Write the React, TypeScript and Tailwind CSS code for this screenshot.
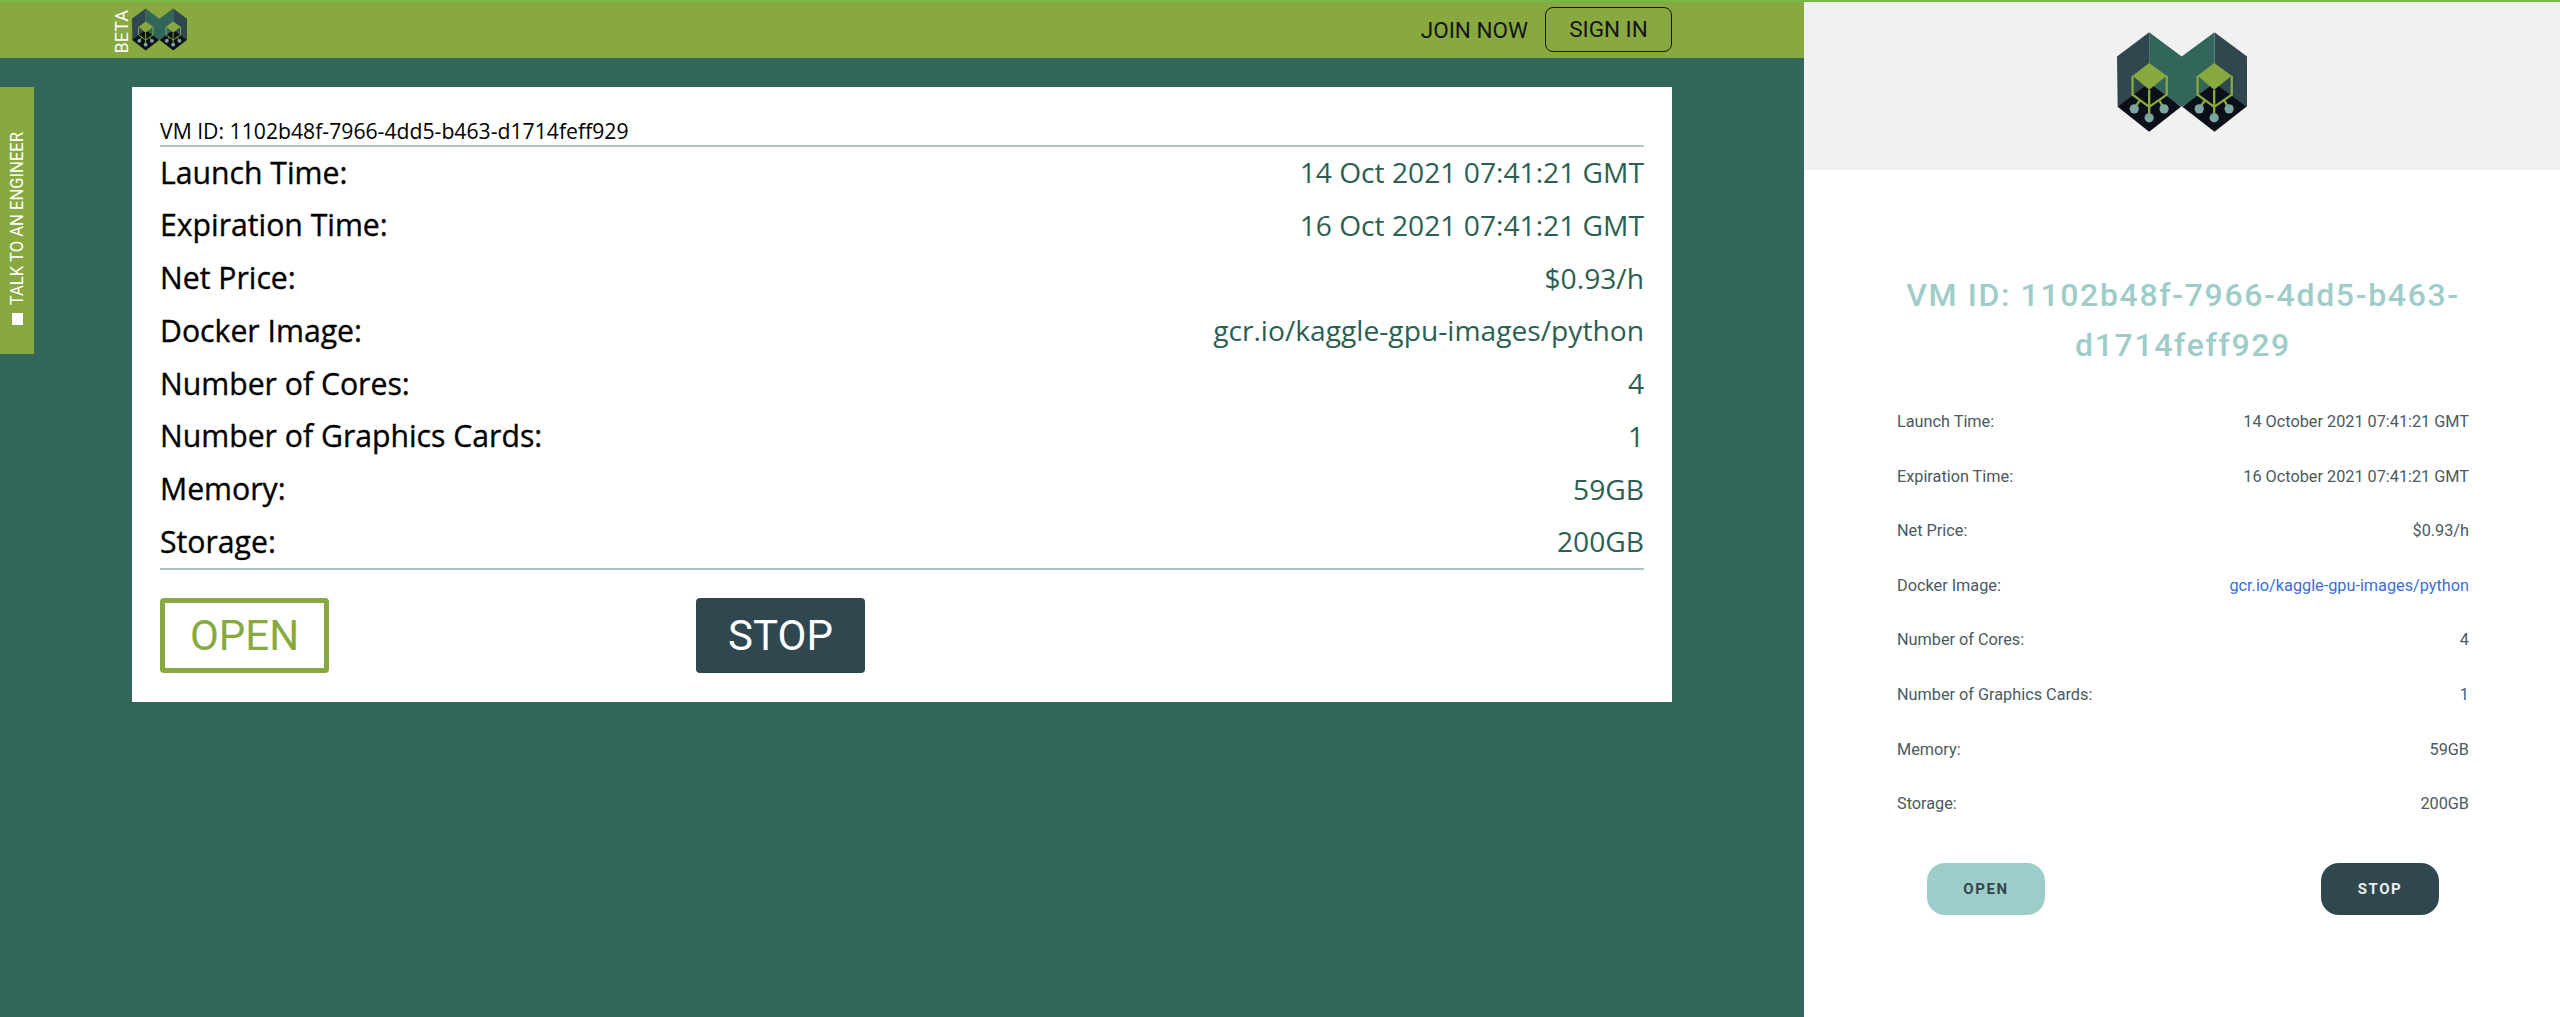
const rows = [
  ["Launch Time:", "14 Oct 2021 07:41:21 GMT", "14 October 2021 07:41:21 GMT"],
  ["Expiration Time:", "16 Oct 2021 07:41:21 GMT", "16 October 2021 07:41:21 GMT"],
  ["Net Price:", "$0.93/h", "$0.93/h"],
  ["Docker Image:", "gcr.io/kaggle-gpu-images/python", "gcr.io/kaggle-gpu-images/python"],
  ["Number of Cores:", "4", "4"],
  ["Number of Graphics Cards:", "1", "1"],
  ["Memory:", "59GB", "59GB"],
  ["Storage:", "200GB", "200GB"],
];

function Unit({ dx }: { dx: number }) {
  return (
    <g transform={`translate(${dx} 0)`}>
      <polygon points="100,168 150,130 203,168 150,210" fill="#87a93f" />
      <path d="M100 168V225L150 262L203 225V168M150 210V290M122 242L106 266M180 242L194 266" fill="none" stroke="#87a93f" strokeWidth="7" />
      <circle cx="105" cy="268" r="14" fill="#7da5a1" />
      <circle cx="150" cy="295" r="14" fill="#7da5a1" />
      <circle cx="195" cy="268" r="14" fill="#7da5a1" />
    </g>
  );
}

function Logo({ className }: { className: string }) {
  return (
    <svg viewBox="53 37 392 300" className={className}>
      <polygon points="150,37 53,110 55,262 150,262" fill="#31474f" />
      <polygon points="347,37 445,110 445,262 347,262" fill="#31474f" />
      <polygon points="150,37 248,110 347,37 347,200 248,262 150,200" fill="#33665a" />
      <polygon points="55,262 150,190 246,262 150,337" fill="#0a0f18" />
      <polygon points="250,262 347,190 443,262 347,337" fill="#0a0f18" />
      <Unit dx={0} />
      <Unit dx={196} />
    </svg>
  );
}

export default function App() {
  return (
    <div className="flex flex-col h-[1017px] w-full overflow-hidden bg-white font-['Roboto',sans-serif]">
      <div className="h-[2px] bg-[#76b947] shrink-0" />
      <div className="flex flex-1 min-h-0">
        <div className="relative w-[1804px] shrink-0 bg-[#33665a]">
          <header className="h-[56px] bg-[#87a93f] flex items-center pl-[112px] pr-[132px]">
            <span className="[writing-mode:vertical-rl] rotate-180 text-white text-[18px] leading-[19px] -mb-[4px]">BETA</span>
            <Logo className="w-[55px] h-[43px] ml-[1px] -mt-[2px]" />
            <span className="ml-auto text-[22.5px] text-[#151515] mr-[17px] pt-[2px]">JOIN NOW</span>
            <span className="w-[127px] h-[45px] rounded-[8px] border-[1.5px] border-[#151515] flex items-center justify-center text-[22.5px] text-[#151515] -mt-[2px] pt-[2px]">SIGN IN</span>
          </header>
          <div className="absolute left-0 top-[85px] w-[34px] h-[267px] bg-[#87a93f] flex flex-col justify-end items-center pb-[29px]">
            <span className="[writing-mode:vertical-rl] rotate-180 scale-x-[1.12] text-white text-[16.6px] leading-[20px] whitespace-nowrap">TALK TO AN ENGINEER</span>
            <span className="w-[11px] h-[12px] bg-white mt-[8px]" />
          </div>
          <main className="ml-[132px] mt-[29px] w-[1540px] h-[615px] bg-white px-[28px] pt-[29px] font-['Open_Sans',sans-serif]">
            <div className="text-[21.2px] leading-[29px] h-[29px] text-black border-b-2 border-[#b0c5c6] box-content">VM ID: 1102b48f-7966-4dd5-b463-d1714feff929</div>
            <div className="border-b-2 border-[#a6c2c6] h-[424px] flex flex-col justify-start -mt-px">
              {rows.map((r) => (
                <div key={r[0]} className="flex justify-between items-center h-[52.8px]">
                  <span className="text-black text-[30.2px] [-webkit-text-stroke:0.35px_black]">{r[0]}</span>
                  <span className="text-[#2b5f52] text-[28.2px]">{r[1]}</span>
                </div>
              ))}
            </div>
            <div className="flex mt-[28px]">
              <button className="w-[169px] h-[75px] rounded-[4px] border-[5px] border-[#87a93f] text-[#87a93f] text-[42px] font-['Roboto',sans-serif] flex items-center justify-center">OPEN</button>
              <button className="w-[169px] h-[75px] rounded-[4px] bg-[#31474f] text-white text-[42px] font-['Roboto',sans-serif] ml-[367px] flex items-center justify-center">STOP</button>
            </div>
          </main>
        </div>
        <aside className="flex-1 min-w-0">
          <div className="h-[168px] bg-[#f1f1f1] flex justify-center pt-[30px]">
            <Logo className="w-[130px] h-[100px]" />
          </div>
          <div className="pl-[93px] pr-[91px] pt-[100px]">
            <h1 className="text-center text-[32px] leading-[50px] tracking-[1.65px] font-medium text-[#9ecdc9]">VM ID: 1102b48f-7966-4dd5-b463-d1714feff929</h1>
            <div className="mt-[25px]">
              {rows.map((r) => (
                <div key={r[0]} className="flex justify-between items-center h-[54.6px] text-[16.25px] text-[#4a5a60]">
                  <span>{r[0]}</span>
                  <span className={r[0] === "Docker Image:" ? "text-[#3b6fd4]" : r[0] === "Number of Graphics Cards:" ? "text-[#3b5f8a]" : ""}>{r[2]}</span>
                </div>
              ))}
            </div>
            <div className="flex mt-[31px] pl-[30px]">
              <button className="w-[118px] h-[52px] rounded-[18px] bg-[#9ecdc9] text-[#31474f] text-[15px] font-bold tracking-[1.6px]">OPEN</button>
              <button className="w-[118px] h-[52px] rounded-[18px] bg-[#31474f] text-[#e8eeee] text-[15px] font-bold tracking-[1.6px] ml-[276px]">STOP</button>
            </div>
          </div>
        </aside>
      </div>
    </div>
  );
}
